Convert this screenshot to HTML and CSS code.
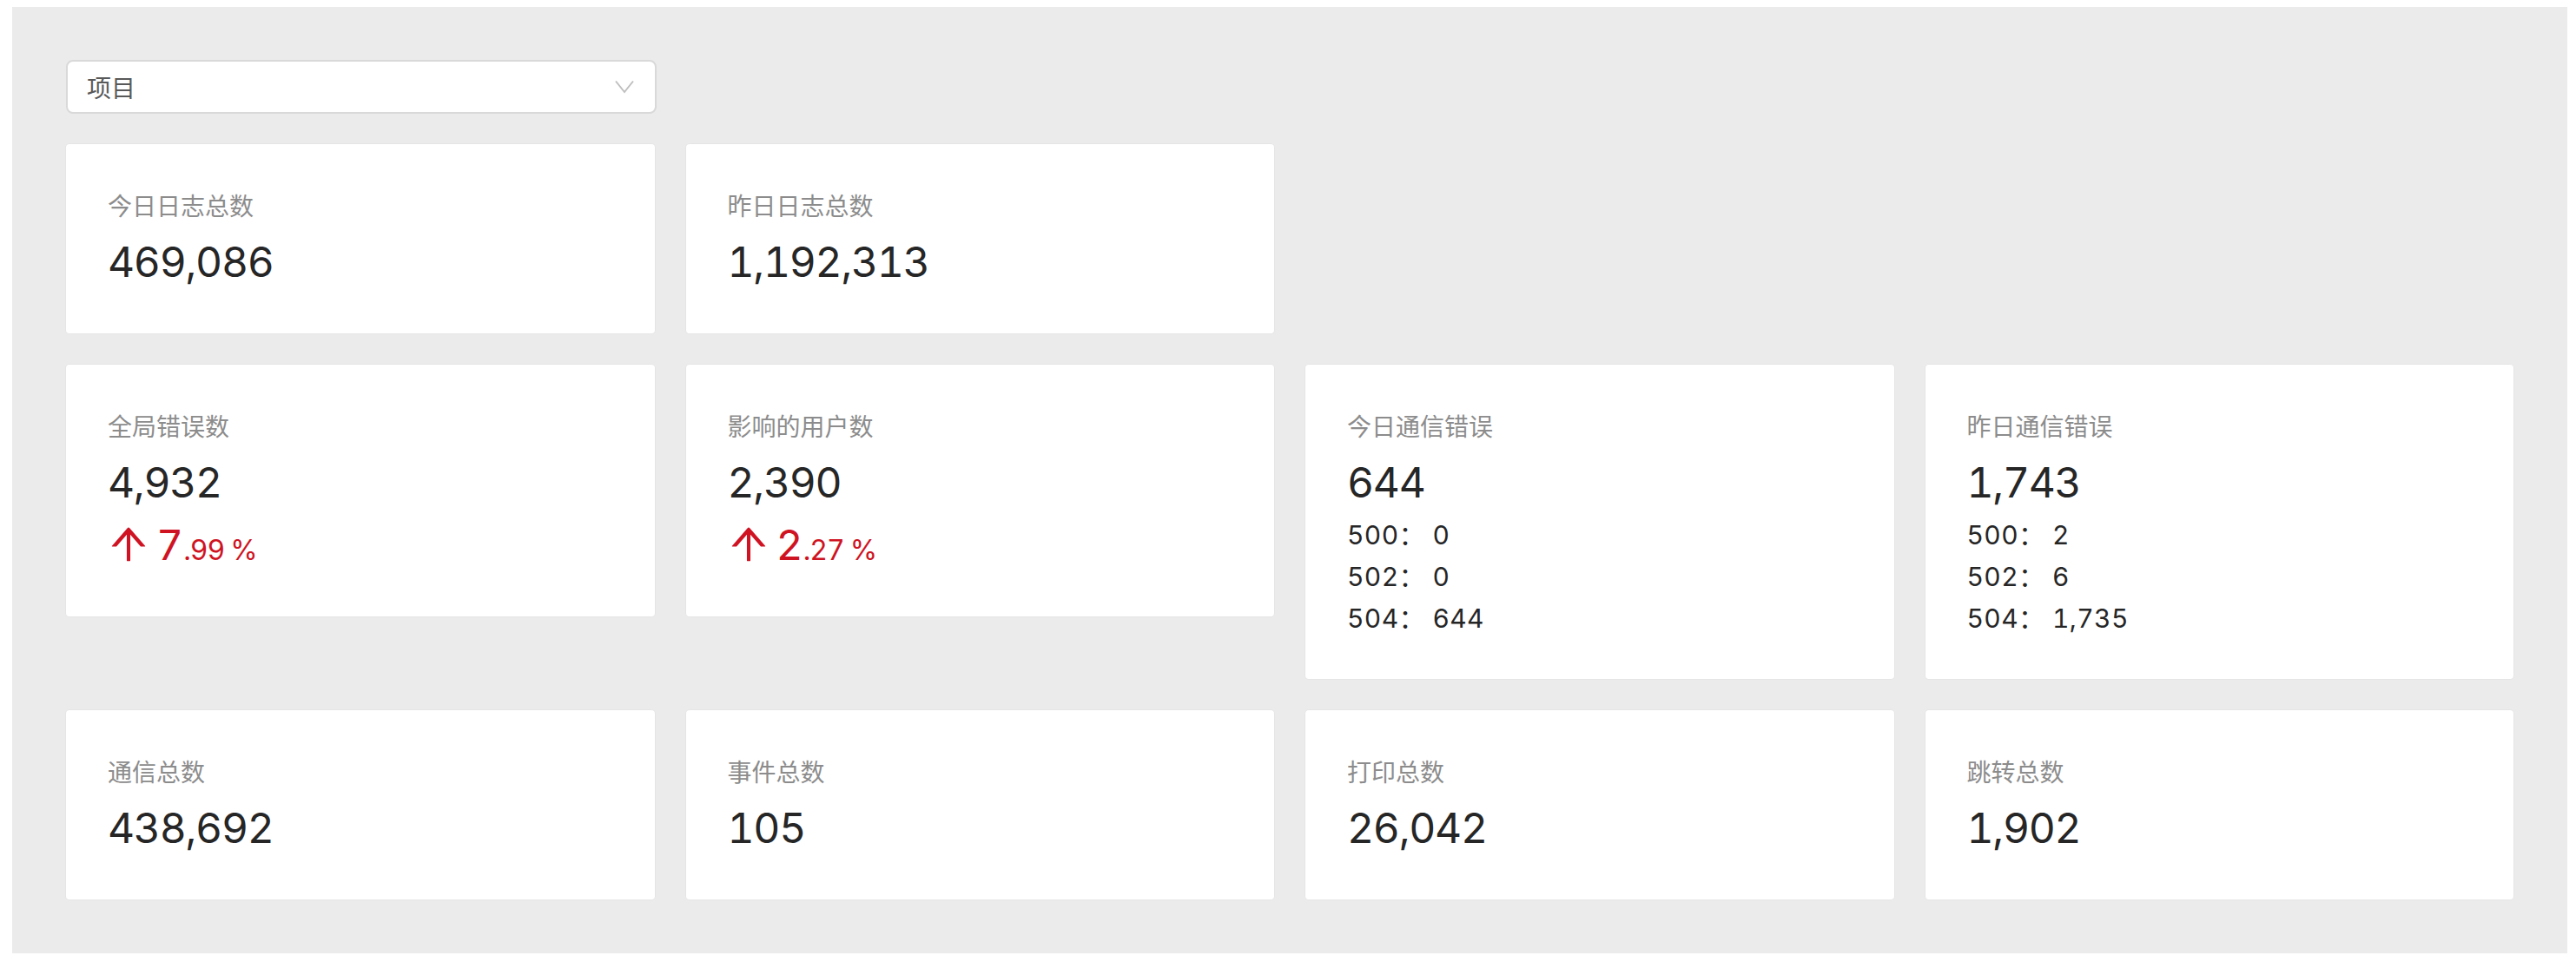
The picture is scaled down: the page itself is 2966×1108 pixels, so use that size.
FILE: index.html
```html
<!DOCTYPE html>
<html lang="zh-CN">
<head>
<meta charset="utf-8">
<title>日志统计</title>
<link rel="stylesheet" href="styles.css">
</head>
<body>
<div class="page">
  <div class="select">
    <span class="select-text">项目</span>
    <svg class="select-arrow" width="22" height="16" viewBox="0 0 22 16"><polyline points="1,1.5 11,14 21,1.5" fill="none" stroke="#bfbfbf" stroke-width="2"/></svg>
  </div>

  <div class="rows">
    <div class="row">
      <div class="card">
        <div class="label">今日日志总数</div>
        <div class="value">469,086</div>
      </div>
      <div class="card">
        <div class="label">昨日日志总数</div>
        <div class="value">1,192,313</div>
      </div>
    </div>

    <div class="row">
      <div class="card">
        <div class="label">全局错误数</div>
        <div class="value">4,932</div>
        <div class="trend">
          <svg class="trend-icon" width="48" height="48" viewBox="64 64 896 896" fill="currentColor"><path d="M868 545.5L536.1 163a31.96 31.96 0 00-48.3 0L156 545.5a7.97 7.970 0 006 13.2h81c4.6 0 9-2 12.1-5.5L474 300.9V864c0 4.4 3.6 8 8 8h60c4.4 0 8-3.6 8-8V300.9l218.9 252.3c3 3.5 7.4 5.5 12.1 5.5h81c6.8 0 10.5-8 6-13.2z"/></svg><span class="int">7</span><span class="dec">.99</span><span class="suf">%</span>
        </div>
      </div>
      <div class="card">
        <div class="label">影响的用户数</div>
        <div class="value">2,390</div>
        <div class="trend">
          <svg class="trend-icon" width="48" height="48" viewBox="64 64 896 896" fill="currentColor"><path d="M868 545.5L536.1 163a31.96 31.96 0 00-48.3 0L156 545.5a7.97 7.970 0 006 13.2h81c4.6 0 9-2 12.1-5.5L474 300.9V864c0 4.4 3.6 8 8 8h60c4.4 0 8-3.6 8-8V300.9l218.9 252.3c3 3.5 7.4 5.5 12.1 5.5h81c6.8 0 10.5-8 6-13.2z"/></svg><span class="int">2</span><span class="dec">.27</span><span class="suf">%</span>
        </div>
      </div>
      <div class="card">
        <div class="label">今日通信错误</div>
        <div class="value">644</div>
        <div class="sub">500： 0</div>
        <div class="sub">502： 0</div>
        <div class="sub">504： 644</div>
      </div>
      <div class="card">
        <div class="label">昨日通信错误</div>
        <div class="value">1,743</div>
        <div class="sub">500： 2</div>
        <div class="sub">502： 6</div>
        <div class="sub">504： 1,735</div>
      </div>
    </div>

    <div class="row">
      <div class="card">
        <div class="label">通信总数</div>
        <div class="value">438,692</div>
      </div>
      <div class="card">
        <div class="label">事件总数</div>
        <div class="value">105</div>
      </div>
      <div class="card">
        <div class="label">打印总数</div>
        <div class="value">26,042</div>
      </div>
      <div class="card">
        <div class="label">跳转总数</div>
        <div class="value">1,902</div>
      </div>
    </div>
  </div>
</div>
</body>
</html>
```

FILE: styles.css
```css
html, body {
  margin: 0;
  padding: 0;
  background: #ffffff;
}

.page {
  margin: 8px 10px 10px 14px;
  padding: 61px 62px 62px 62px;
  background: #ebebeb;
  font-family: "Noto Sans CJK SC", sans-serif;
}

.select {
  box-sizing: border-box;
  width: 680px;
  height: 62px;
  margin-bottom: 35px;
  padding: 0 24px 0 22px;
  display: flex;
  align-items: center;
  justify-content: space-between;
  background: #ffffff;
  border: 2px solid #d9d9d9;
  border-radius: 8px;
}

.select-text {
  font-family: "Noto Sans CJK SC", sans-serif;
  font-size: 28px;
  color: #595959;
}

.select-arrow {
  display: block;
}

.rows {
  display: flex;
  flex-direction: column;
  gap: 36px;
}

.row {
  display: grid;
  grid-template-columns: repeat(4, 1fr);
  gap: 36px;
  align-items: start;
}

.card {
  background: #ffffff;
  border-radius: 4px;
  padding: 48px 48px 46px 48px;
  box-shadow: 0 0 0 1px rgba(0, 0, 0, 0.025);
}

.label {
  font-family: "Noto Sans CJK SC", sans-serif;
  font-size: 28px;
  line-height: 44px;
  color: #8c8c8c;
  margin-bottom: 8px;
}

.value {
  font-family: Inter, "Noto Sans CJK SC", sans-serif;
  font-variant-numeric: tabular-nums;
  font-size: 48px;
  line-height: 72px;
  letter-spacing: -1.3px;
  color: #262626;
}

.trend {
  font-family: Inter, sans-serif;
  font-variant-numeric: tabular-nums;
  font-size: 48px;
  line-height: 72px;
  color: #cf1322;
  white-space: nowrap;
}

.trend-icon {
  vertical-align: -6px;
  margin-right: 8px;
}

.dec {
  font-size: 32px;
  line-height: 1;
  letter-spacing: -1px;
}

.suf {
  font-size: 32px;
  line-height: 1;
  margin-left: 7px;
}

.sub {
  font-family: Inter, "Noto Sans CJK SC", sans-serif;
  font-variant-numeric: tabular-nums;
  font-size: 30px;
  line-height: 48px;
  letter-spacing: 0.4px;
  color: #262626;
}
```
